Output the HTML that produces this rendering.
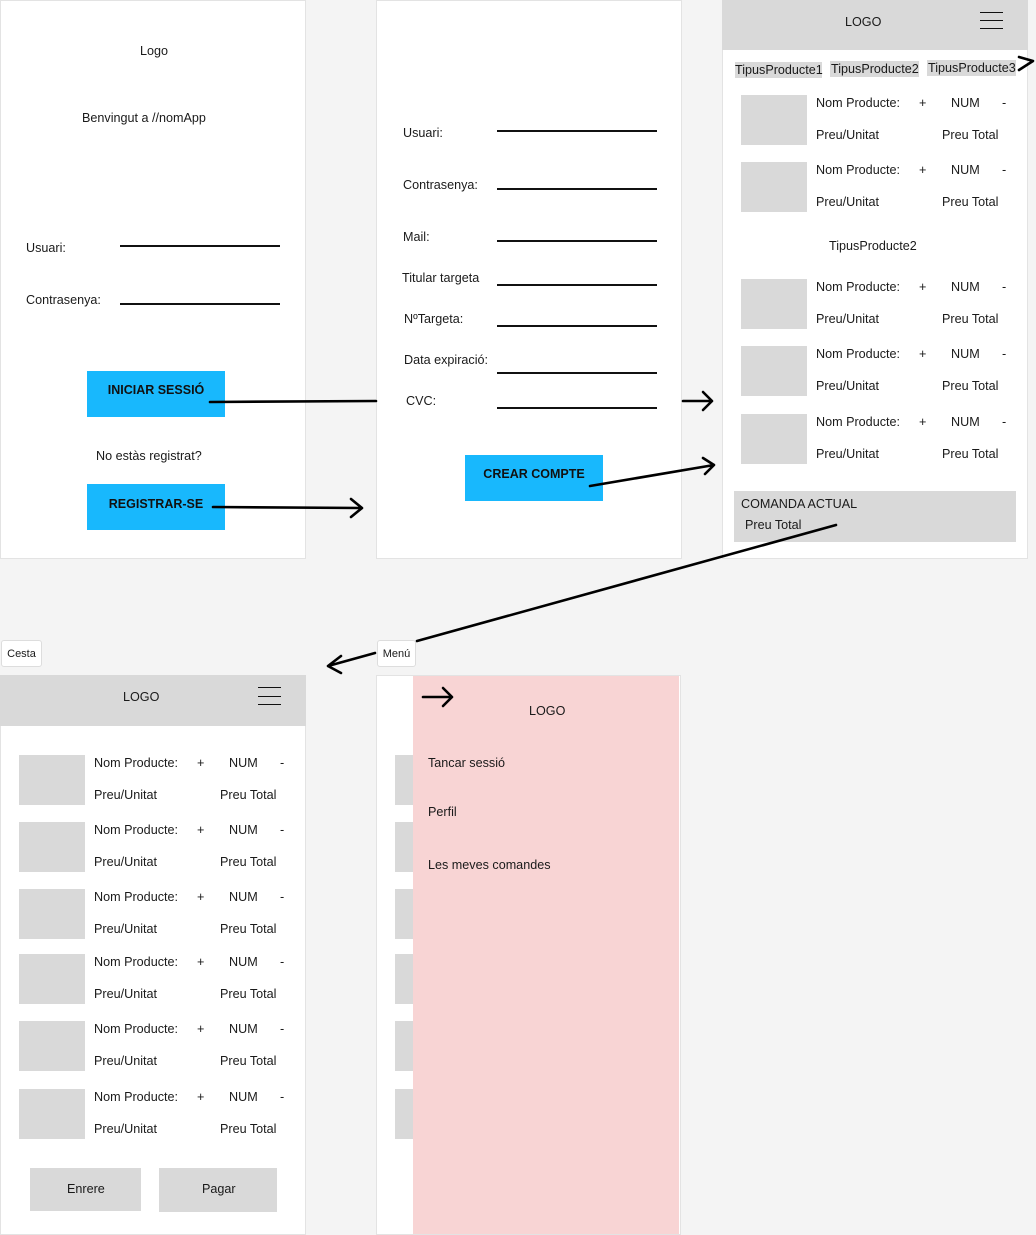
<!DOCTYPE html>
<html><head><meta charset="utf-8"><style>
*{margin:0;padding:0;box-sizing:border-box}
body{width:1036px;height:1234px;background:#f4f4f4;position:relative;overflow:hidden;font-family:"Liberation Sans",sans-serif;font-size:12.6px;color:#1a1a1a}
.f{position:absolute;background:#fff;border:1px solid #e3e3e3}
.t{position:absolute;line-height:14px;white-space:nowrap}
.g{position:absolute;background:#d9d9d9}
.ln{position:absolute;height:1.5px;background:#111}
.btn{position:absolute;background:#18b8fd;font-weight:bold;font-size:12.5px;display:flex;align-items:center;justify-content:center;color:#111}
.lab{position:absolute;background:#fff;border:1px solid #ddd;border-radius:3px;font-size:11px;display:flex;align-items:center;justify-content:center}
</style></head><body>

<!-- Frame 1 -->
<div class="f" style="left:0;top:0;width:306px;height:559px"></div>
<div class="t" style="left:140px;top:44px">Logo</div>
<div class="t" style="left:82px;top:111px">Benvingut a //nomApp</div>
<div class="t" style="left:26px;top:241px">Usuari:</div>
<div class="ln" style="left:120px;top:245px;width:160px"></div>
<div class="t" style="left:26px;top:293px">Contrasenya:</div>
<div class="ln" style="left:120px;top:303px;width:160px"></div>
<div class="btn" style="left:87px;top:371px;width:138px;height:46px;padding-bottom:8px">INICIAR SESSIÓ</div>
<div class="t" style="left:96px;top:449px">No estàs registrat?</div>
<div class="btn" style="left:87px;top:484px;width:138px;height:46px;padding-bottom:6px">REGISTRAR-SE</div>

<!-- Frame 2 -->
<div class="f" style="left:376px;top:0;width:306px;height:559px"></div>
<div class="t" style="left:403px;top:126px">Usuari:</div>
<div class="t" style="left:403px;top:178px">Contrasenya:</div>
<div class="t" style="left:403px;top:230px">Mail:</div>
<div class="t" style="left:402px;top:271px">Titular targeta</div>
<div class="t" style="left:404px;top:312px">NºTargeta:</div>
<div class="t" style="left:404px;top:353px">Data expiració:</div>
<div class="t" style="left:406px;top:394px">CVC:</div>
<div class="ln" style="left:497px;top:130px;width:160px"></div>
<div class="ln" style="left:497px;top:188px;width:160px"></div>
<div class="ln" style="left:497px;top:240px;width:160px"></div>
<div class="ln" style="left:497px;top:284px;width:160px"></div>
<div class="ln" style="left:497px;top:325px;width:160px"></div>
<div class="ln" style="left:497px;top:372px;width:160px"></div>
<div class="ln" style="left:497px;top:407px;width:160px"></div>
<div class="btn" style="left:465px;top:455px;width:138px;height:46px;padding-bottom:8px">CREAR COMPTE</div>

<!-- Frame 3 -->
<div class="f" style="left:722px;top:0;width:306px;height:559px"></div>
<div class="g" style="left:722px;top:0;width:306px;height:50px"></div>
<div class="t" style="left:845px;top:15px">LOGO</div>
<div class="ln" style="left:980px;top:12px;width:23px;height:1px"></div>
<div class="ln" style="left:980px;top:20px;width:23px;height:1px"></div>
<div class="ln" style="left:980px;top:28px;width:23px;height:1px"></div>
<div class="g" style="left:735px;top:62px;width:87px;height:16px"></div>
<div class="g" style="left:830px;top:61px;width:89px;height:16px"></div>
<div class="g" style="left:927px;top:60px;width:89px;height:16px"></div>
<div class="t" style="left:735px;top:63px">TipusProducte1</div>
<div class="t" style="left:831px;top:62px">TipusProducte2</div>
<div class="t" style="left:928px;top:61px">TipusProducte3</div>
<div class="t" style="left:829px;top:239px">TipusProducte2</div>
<div class="g" style="left:734px;top:491px;width:282px;height:51px"></div>
<div class="t" style="left:741px;top:497px">COMANDA ACTUAL</div>
<div class="t" style="left:745px;top:518px">Preu Total</div>

<!-- Frame 4 -->
<div class="f" style="left:0;top:675px;width:306px;height:560px"></div>
<div class="g" style="left:0;top:675px;width:306px;height:51px"></div>
<div class="t" style="left:123px;top:690px">LOGO</div>
<div class="ln" style="left:258px;top:687px;width:23px;height:1px"></div>
<div class="ln" style="left:258px;top:696px;width:23px;height:1px"></div>
<div class="ln" style="left:258px;top:704px;width:23px;height:1px"></div>
<div class="g" style="left:30px;top:1168px;width:111px;height:43px"></div>
<div class="t" style="left:67px;top:1182px">Enrere</div>
<div class="g" style="left:159px;top:1168px;width:118px;height:44px"></div>
<div class="t" style="left:202px;top:1182px">Pagar</div>

<!-- Frame 5 -->
<div class="f" style="left:376px;top:675px;width:305px;height:560px"></div>
<div class="g" style="left:395px;top:755px;width:18px;height:50px"></div>
<div class="g" style="left:395px;top:822px;width:18px;height:50px"></div>
<div class="g" style="left:395px;top:889px;width:18px;height:50px"></div>
<div class="g" style="left:395px;top:954px;width:18px;height:50px"></div>
<div class="g" style="left:395px;top:1021px;width:18px;height:50px"></div>
<div class="g" style="left:395px;top:1089px;width:18px;height:50px"></div>
<div style="position:absolute;left:413px;top:676px;width:266px;height:558px;background:#f8d4d4"></div>
<div class="t" style="left:529px;top:704px">LOGO</div>
<div class="t" style="left:428px;top:756px">Tancar sessió</div>
<div class="t" style="left:428px;top:805px">Perfil</div>
<div class="t" style="left:428px;top:858px">Les meves comandes</div>

<div class="lab" style="left:1px;top:640px;width:41px;height:27px">Cesta</div>
<div class="lab" style="left:377px;top:640px;width:39px;height:27px">Menú</div>

<!-- products -->
<div class="g" style="left:741px;top:95px;width:66px;height:50px"></div>
<div class="t" style="left:816px;top:96px">Nom Producte:</div><div class="t" style="left:919px;top:96px">+</div><div class="t" style="left:951px;top:96px">NUM</div><div class="t" style="left:1002px;top:96px">-</div>
<div class="t" style="left:816px;top:128px">Preu/Unitat</div><div class="t" style="left:942px;top:128px">Preu Total</div>
<div class="g" style="left:741px;top:162px;width:66px;height:50px"></div>
<div class="t" style="left:816px;top:163px">Nom Producte:</div><div class="t" style="left:919px;top:163px">+</div><div class="t" style="left:951px;top:163px">NUM</div><div class="t" style="left:1002px;top:163px">-</div>
<div class="t" style="left:816px;top:195px">Preu/Unitat</div><div class="t" style="left:942px;top:195px">Preu Total</div>
<div class="g" style="left:741px;top:279px;width:66px;height:50px"></div>
<div class="t" style="left:816px;top:280px">Nom Producte:</div><div class="t" style="left:919px;top:280px">+</div><div class="t" style="left:951px;top:280px">NUM</div><div class="t" style="left:1002px;top:280px">-</div>
<div class="t" style="left:816px;top:312px">Preu/Unitat</div><div class="t" style="left:942px;top:312px">Preu Total</div>
<div class="g" style="left:741px;top:346px;width:66px;height:50px"></div>
<div class="t" style="left:816px;top:347px">Nom Producte:</div><div class="t" style="left:919px;top:347px">+</div><div class="t" style="left:951px;top:347px">NUM</div><div class="t" style="left:1002px;top:347px">-</div>
<div class="t" style="left:816px;top:379px">Preu/Unitat</div><div class="t" style="left:942px;top:379px">Preu Total</div>
<div class="g" style="left:741px;top:414px;width:66px;height:50px"></div>
<div class="t" style="left:816px;top:415px">Nom Producte:</div><div class="t" style="left:919px;top:415px">+</div><div class="t" style="left:951px;top:415px">NUM</div><div class="t" style="left:1002px;top:415px">-</div>
<div class="t" style="left:816px;top:447px">Preu/Unitat</div><div class="t" style="left:942px;top:447px">Preu Total</div>

<div class="g" style="left:19px;top:755px;width:66px;height:50px"></div>
<div class="t" style="left:94px;top:756px">Nom Producte:</div><div class="t" style="left:197px;top:756px">+</div><div class="t" style="left:229px;top:756px">NUM</div><div class="t" style="left:280px;top:756px">-</div>
<div class="t" style="left:94px;top:788px">Preu/Unitat</div><div class="t" style="left:220px;top:788px">Preu Total</div>
<div class="g" style="left:19px;top:822px;width:66px;height:50px"></div>
<div class="t" style="left:94px;top:823px">Nom Producte:</div><div class="t" style="left:197px;top:823px">+</div><div class="t" style="left:229px;top:823px">NUM</div><div class="t" style="left:280px;top:823px">-</div>
<div class="t" style="left:94px;top:855px">Preu/Unitat</div><div class="t" style="left:220px;top:855px">Preu Total</div>
<div class="g" style="left:19px;top:889px;width:66px;height:50px"></div>
<div class="t" style="left:94px;top:890px">Nom Producte:</div><div class="t" style="left:197px;top:890px">+</div><div class="t" style="left:229px;top:890px">NUM</div><div class="t" style="left:280px;top:890px">-</div>
<div class="t" style="left:94px;top:922px">Preu/Unitat</div><div class="t" style="left:220px;top:922px">Preu Total</div>
<div class="g" style="left:19px;top:954px;width:66px;height:50px"></div>
<div class="t" style="left:94px;top:955px">Nom Producte:</div><div class="t" style="left:197px;top:955px">+</div><div class="t" style="left:229px;top:955px">NUM</div><div class="t" style="left:280px;top:955px">-</div>
<div class="t" style="left:94px;top:987px">Preu/Unitat</div><div class="t" style="left:220px;top:987px">Preu Total</div>
<div class="g" style="left:19px;top:1021px;width:66px;height:50px"></div>
<div class="t" style="left:94px;top:1022px">Nom Producte:</div><div class="t" style="left:197px;top:1022px">+</div><div class="t" style="left:229px;top:1022px">NUM</div><div class="t" style="left:280px;top:1022px">-</div>
<div class="t" style="left:94px;top:1054px">Preu/Unitat</div><div class="t" style="left:220px;top:1054px">Preu Total</div>
<div class="g" style="left:19px;top:1089px;width:66px;height:50px"></div>
<div class="t" style="left:94px;top:1090px">Nom Producte:</div><div class="t" style="left:197px;top:1090px">+</div><div class="t" style="left:229px;top:1090px">NUM</div><div class="t" style="left:280px;top:1090px">-</div>
<div class="t" style="left:94px;top:1122px">Preu/Unitat</div><div class="t" style="left:220px;top:1122px">Preu Total</div>

<svg style="position:absolute;left:0;top:0" width="1036" height="1234" fill="none" stroke="#000" stroke-width="2.6" stroke-linecap="round" stroke-linejoin="round">
<path d="M210 402 L376 401"/>
<path d="M213 507 L362 508 M351 499 L362 508 L351 517"/>
<path d="M683 401 L712 401 M703 392 L712 401 L703 410"/>
<path d="M590 486 L714 465 M703 458 L714 465 L705 474"/>
<path d="M836 525 L417 641"/>
<path d="M375 653 L328 666 M341 656 L328 666 L341 673"/>
<path d="M423 697 L452 697 M443 688 L452 697 L443 706"/>
<path d="M1019 57 L1033 61 L1019 70"/>
</svg>
</body></html>
